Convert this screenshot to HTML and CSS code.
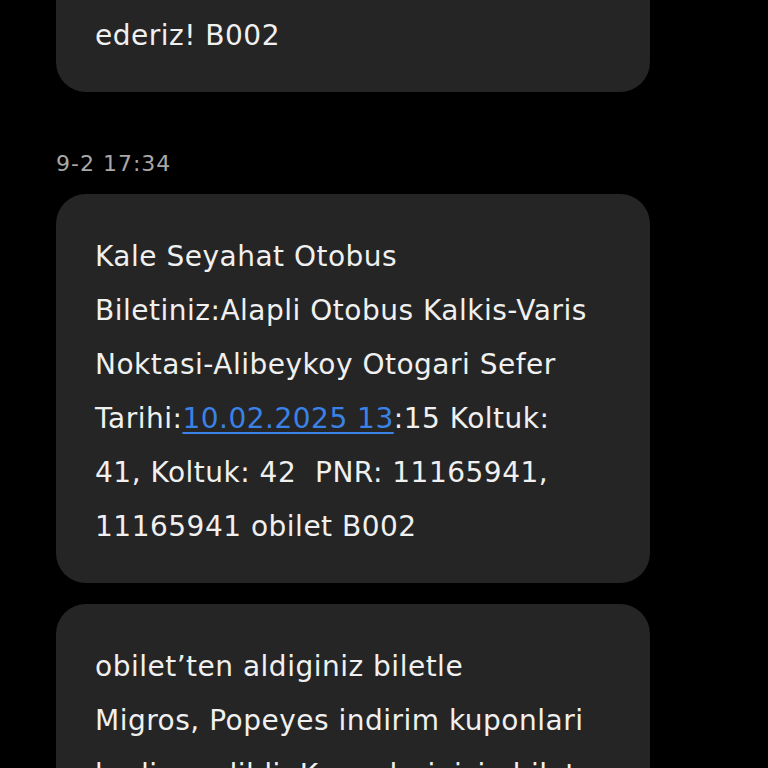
FILE: index.html
```html
<!DOCTYPE html>
<html lang="tr">
<head>
    <meta charset="UTF-8">
    <meta name="viewport" content="width=device-width, initial-scale=1.0">
    <title>Mesajlar</title>
    <link rel="stylesheet" href="styles.css">
</head>
<body>
    <div class="thread">
        <div class="bubble cut">
            <p>ederiz! B002</p>
        </div>

        <div class="stamp">9-2 17:34</div>

        <div class="bubble">
            <p>Kale Seyahat Otobus<br>Biletiniz:Alapli Otobus Kalkis-Varis<br>Noktasi-Alibeykoy Otogari Sefer<br>Tarihi:<a href="#">10.02.2025 13</a>:15 Koltuk:<br>41, Koltuk: 42&nbsp; PNR: 11165941,<br>11165941 obilet B002</p>
        </div>

        <div class="bubble">
            <p>obilet’ten aldiginiz biletle<br>Migros, Popeyes indirim kuponlari<br>hediye edildi. Kuponlarinizi obilet<br>uygulamasindan gorebilirsiniz.</p>
        </div>
    </div>
</body>
</html>
```

FILE: styles.css
```css
html, body {
    margin: 0;
    background: #000;
}

body {
    font-family: "DejaVu Sans", sans-serif;
    color: #f0f0f0;
    overflow: hidden;
    height: 768px;
}

.thread {
    display: flex;
    flex-direction: column;
    padding-left: 56px;
    width: 594px;
}

.bubble {
    background: #252525;
    border-radius: 30px;
    padding: 36px 20px 29px 39px;
    margin-bottom: 21px;
}

.bubble p {
    margin: 0;
    font-size: 28px;
    line-height: 54px;
    letter-spacing: 0.5px;
    white-space: nowrap;
}

/* top message scrolled out of view */
.bubble.cut {
    border-top-left-radius: 0;
    border-top-right-radius: 0;
    padding-top: 9px;
    margin-bottom: 0;
}

.bubble a {
    color: #3a82e6;
    text-decoration: underline;
    text-underline-offset: 4px;
}

.stamp {
    color: #a8a8a8;
    font-size: 22px;
    line-height: 26px;
    letter-spacing: 1px;
    margin: 59px 0 17px 0;
}
```
